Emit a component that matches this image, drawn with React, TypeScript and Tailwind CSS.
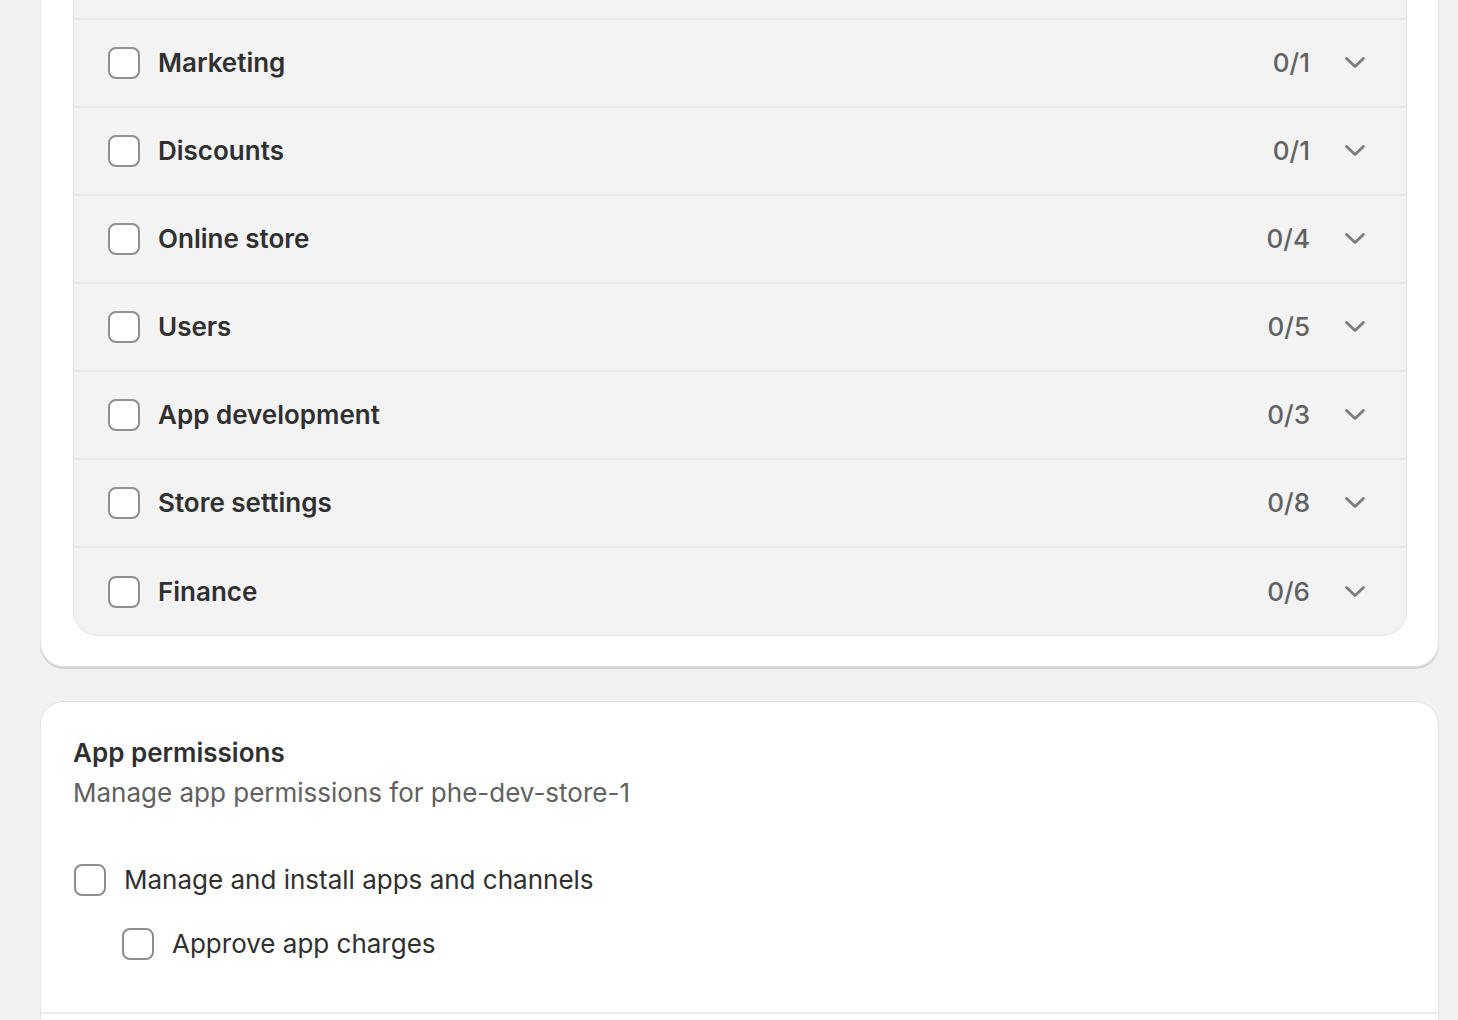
import React from 'react';

const groups = [
  { name: 'Orders', count: '0/9' },
  { name: 'Marketing', count: '0/1' },
  { name: 'Discounts', count: '0/1' },
  { name: 'Online store', count: '0/4' },
  { name: 'Users', count: '0/5' },
  { name: 'App development', count: '0/3' },
  { name: 'Store settings', count: '0/8' },
  { name: 'Finance', count: '0/6' },
];

function Checkbox() {
  return <span className="block w-[32px] h-[32px] shrink-0 rounded-[8px] border-2 border-[#8f8f8f] bg-white" />;
}

function Chevron() {
  return (
    <svg width="40" height="40" viewBox="0 0 40 40" fill="none">
      <path d="M11.5 15.5 L20 23.5 L28.5 15.5" stroke="#7d7d7d" strokeWidth="2.8" strokeLinecap="round" strokeLinejoin="round" />
    </svg>
  );
}

export default function App() {
  return (
    <div className="min-h-screen bg-[#f1f1f1] overflow-hidden text-[#303030]" style={{ fontFamily: 'Inter, "Noto Sans", sans-serif' }}>
      <div className="ml-[40px] w-[1399px] -mt-[104px]">
        {/* access groups card */}
        <section className="bg-white border border-[#e3e3e3] rounded-[24px] shadow-[0_2px_0_0_rgba(0,0,0,0.12)] pl-[32px] pr-[31px] pt-[32px] pb-[30px]">
          <div className="rounded-[24px] bg-[#f3f3f3] border border-[#e6e6e6] overflow-hidden">
            {groups.map((g, i) => (
              <div
                key={g.name}
                className={`flex items-center pl-[34px] pr-[31px] ${i > 0 ? 'border-t-2 border-[#e8e8e8]' : ''} ${i === groups.length - 1 ? 'h-[89px]' : 'h-[88px]'}`}
              >
                <Checkbox />
                <span className="ml-[18px] text-[26px] leading-[40px] font-[560]">{g.name}</span>
                <span className="ml-auto text-[26px] leading-[40px] font-medium text-[#616161]">{g.count}</span>
                <span className="ml-[25px]"><Chevron /></span>
              </div>
            ))}
          </div>
        </section>

        {/* app permissions card */}
        <section className="mt-[34px] bg-white border border-[#e3e3e3] rounded-[24px] shadow-[0_2px_0_0_rgba(0,0,0,0.12)]">
          <div className="px-[32px] pt-[31px] pb-[48px]">
            <h2 className="text-[26px] leading-[40px] font-semibold">App permissions</h2>
            <p className="text-[26px] leading-[40px] text-[#616161]">Manage app permissions for phe-dev-store-1</p>
            <div className="mt-[47px] flex items-center h-[40px] pl-[1px]">
              <Checkbox />
              <span className="ml-[18px] text-[26px] leading-[40px]">Manage and install apps and channels</span>
            </div>
            <div className="mt-[24px] flex items-center h-[40px] pl-[49px]">
              <Checkbox />
              <span className="ml-[18px] text-[26px] leading-[40px]">Approve app charges</span>
            </div>
          </div>
          <div className="border-t-2 border-[#ebebeb] h-[120px]" />
        </section>
      </div>
    </div>
  );
}
